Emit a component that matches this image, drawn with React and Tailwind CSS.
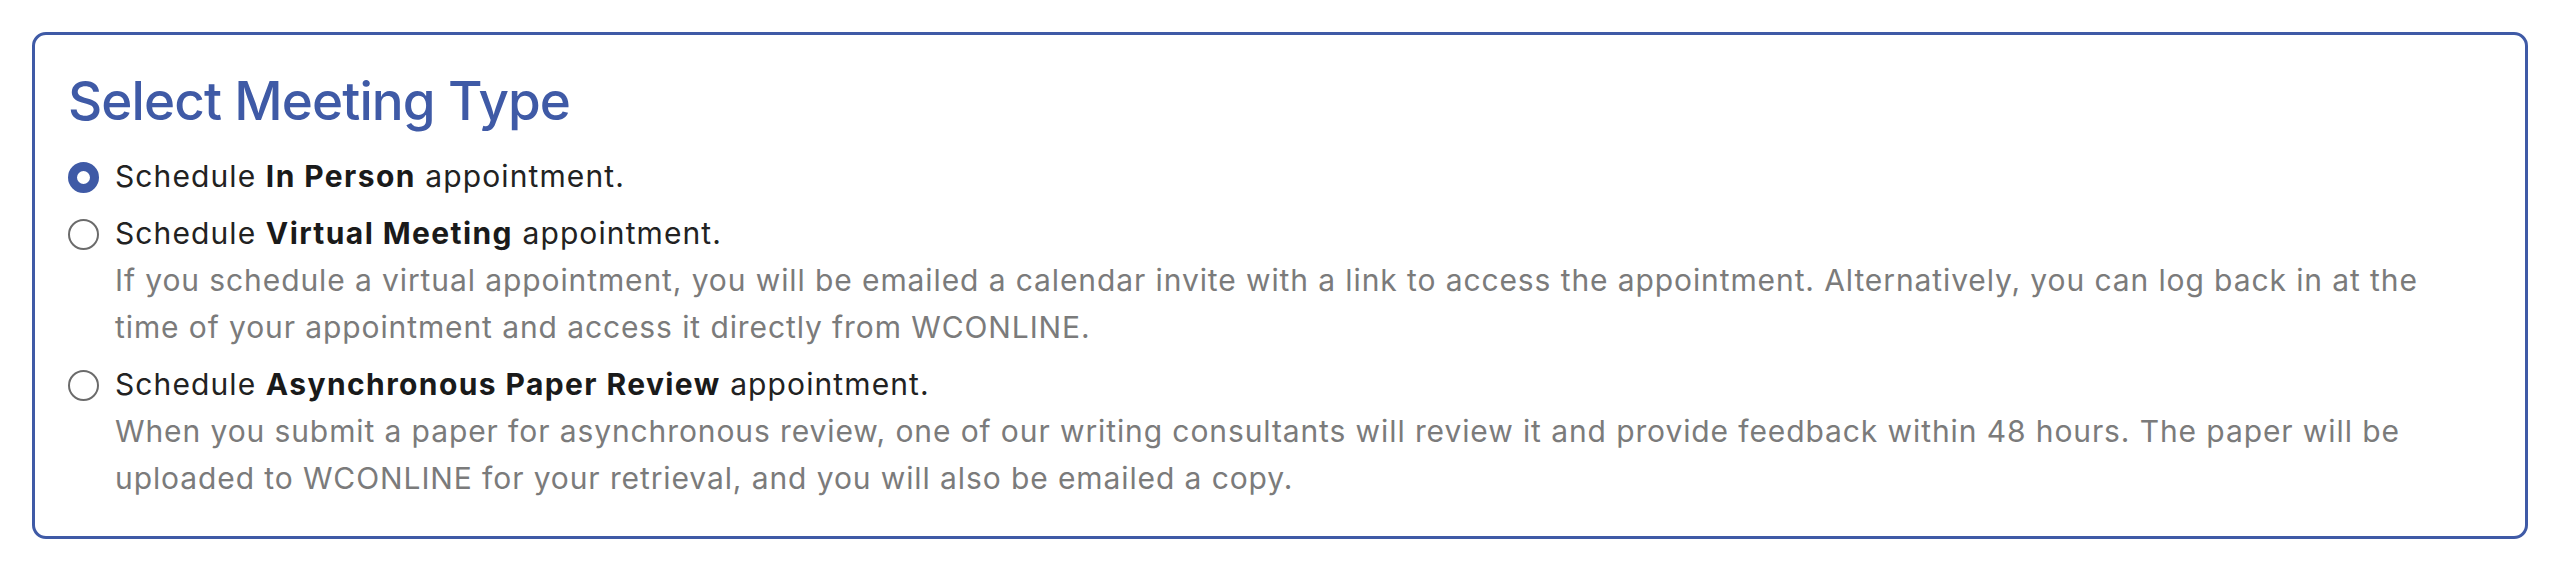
import React from "react";

const options = [
  {
    bold: "In Person",
    checked: true,
    desc: null,
  },
  {
    bold: "Virtual Meeting",
    checked: false,
    desc:
      "If you schedule a virtual appointment, you will be emailed a calendar invite with a link to access the appointment. Alternatively, you can log back in at the time of your appointment and access it directly from WCONLINE.",
  },
  {
    bold: "Asynchronous Paper Review",
    checked: false,
    desc:
      "When you submit a paper for asynchronous review, one of our writing consultants will review it and provide feedback within 48 hours. The paper will be uploaded to WCONLINE for your retrieval, and you will also be emailed a copy.",
  },
];

function Radio({ checked }) {
  return checked ? (
    <div className="mt-[9px] h-[31px] w-[31px] shrink-0 rounded-full border-[9px] border-[#3f5aa6] bg-white" />
  ) : (
    <div className="mt-[9px] h-[31px] w-[31px] shrink-0 rounded-full border-[2px] border-[#6b6b6b] bg-white" />
  );
}

export default function App() {
  return (
    <div
      className="bg-white p-8"
      style={{ fontFamily: "Inter, 'Noto Sans', 'Liberation Sans', sans-serif" }}
    >
      <div className="rounded-[14px] border-[3px] border-[#3f5aa6] pl-[33px] pr-[80px] pt-[34px] pb-[34px]">
        <h2 className="text-[53px] leading-[65px] font-medium tracking-[-0.9px] text-[#3f5aa6]">
          Select Meeting Type
        </h2>
        <div className="mt-[19px] flex flex-col gap-[10px]">
          {options.map((o, i) => (
            <label key={i} className="flex items-start gap-[16px]">
              <Radio checked={o.checked} />
              <div className="text-[30px] leading-[47px]">
                <div className="tracking-[1.1px] text-[#222222]">
                  Schedule{" "}
                  <span className="font-bold tracking-[1.4px] text-[#1a1a1a]">{o.bold}</span>{" "}
                  appointment.
                </div>
                {o.desc && <div className="tracking-[0.9px] text-[#7b7b7b]">{o.desc}</div>}
              </div>
            </label>
          ))}
        </div>
      </div>
    </div>
  );
}
